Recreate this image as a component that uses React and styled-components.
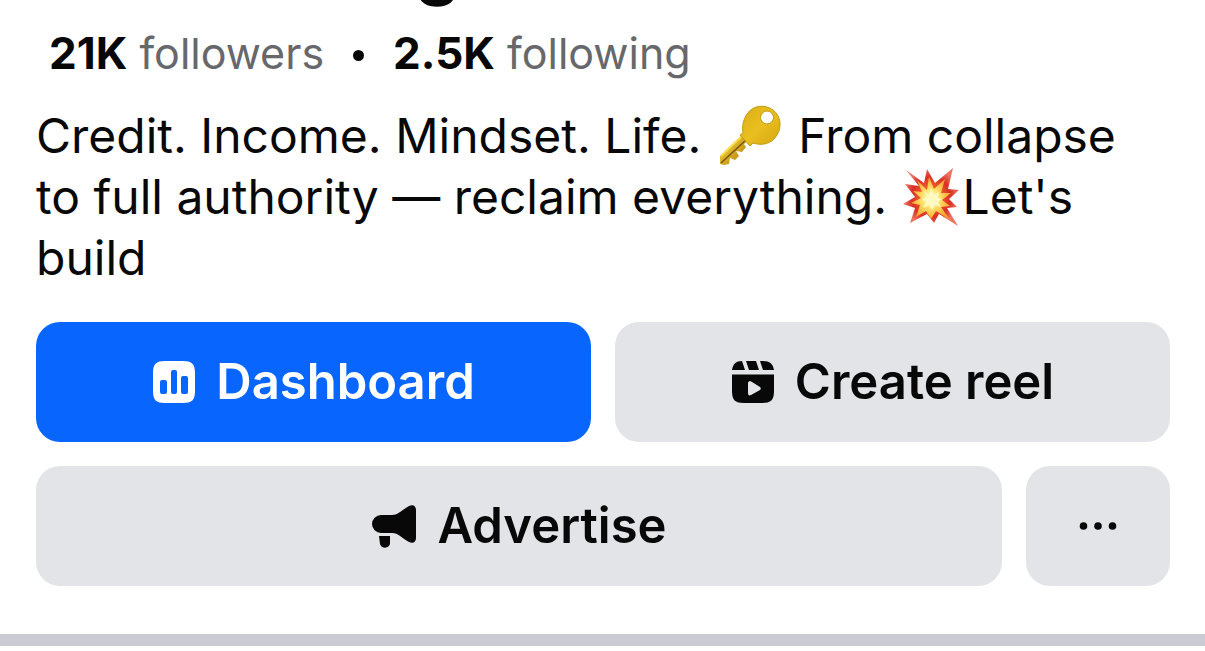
import React from "react";
import styled, { createGlobalStyle } from "styled-components";

const GlobalStyle = createGlobalStyle`
  * { box-sizing: border-box; }
  body {
    margin: 0;
    background: #ffffff;
    color: #080809;
    font-family: Inter, "Liberation Sans", sans-serif;
  }
`;

const Page = styled.main`
  width: 100%;
`;

const NameClip = styled.header`
  height: 27px;
  padding: 0 36px 0 415px;
  overflow: hidden;
`;

const Name = styled.h1`
  margin: -75px 0 0;
  font-size: 72px;
  line-height: 80px;
  font-weight: 700;
`;

const Profile = styled.section`
  padding: 0 35px 48px 36px;
`;

const Stats = styled.div`
  display: flex;
  align-items: center;
  gap: 29px;
  padding-left: 13px;
  font-size: 43px;
  line-height: 52px;
`;

const Stat = styled.a`
  color: #67686b;
  text-decoration: none;
  white-space: nowrap;

  strong {
    color: #080809;
    font-size: 44px;
    font-weight: 700;
  }
`;

const Dot = styled.span`
  width: 11px;
  height: 11px;
  margin-top: 4px;
  border-radius: 50%;
  background: #080809;
`;

const Bio = styled.p`
  margin: 26px 0 34px;
  font-size: 48px;
  line-height: 61px;
`;

const Emoji = styled.svg`
  display: inline-block;
  width: 62px;
  height: 60px;
  margin: -12px ${(p) => p.$gap || 0}px;
  vertical-align: baseline;
`;

const Actions = styled.div`
  display: grid;
  gap: 24px;
`;

const ActionRow = styled.div`
  display: grid;
  grid-template-columns: ${(p) => p.$columns};
  gap: 24px;
`;

const Button = styled.button`
  display: flex;
  align-items: center;
  justify-content: center;
  gap: 20px;
  height: 120px;
  padding: 0;
  border: 0;
  border-radius: 24px;
  background: ${(p) => (p.$primary ? "#0866ff" : "#e3e4e8")};
  color: ${(p) => (p.$primary ? "#ffffff" : "#080809")};
  font-family: inherit;
  font-size: 49px;
  line-height: 60px;
  font-weight: 600;
  cursor: pointer;
`;

const Icon = styled.svg`
  flex: none;
  width: ${(p) => p.$width || 44}px;
  height: 44px;
  fill: currentColor;
`;

const Divider = styled.hr`
  height: 12px;
  margin: 0;
  border: 0;
  background: #c9ccd3;
`;

function KeyEmoji() {
  return (
    <Emoji viewBox="0 0 62 60" $gap={4} role="img" aria-label="key">
      <defs>
        <linearGradient id="keyBow" x1="0" y1="0" x2="1" y2="1">
          <stop offset="0" stopColor="#d8ad16" />
          <stop offset="0.5" stopColor="#e9bf20" />
          <stop offset="1" stopColor="#d6a710" />
        </linearGradient>
        <linearGradient id="keyShaft" x1="0" y1="0" x2="1" y2="1">
          <stop offset="0.2" stopColor="#f3d33c" />
          <stop offset="0.8" stopColor="#b98710" />
        </linearGradient>
      </defs>
      <path fill="url(#keyShaft)" d="M24 29 1 51v8l4 1 5-1 1-6 5 2 4-4-3-5 6 1 4-5-2-3 7-6-4-7Z" />
      <path fill="none" stroke="#795409" strokeWidth="1.5" d="M27 35 2 58" />
      <path fill="none" stroke="#f8dd4c" strokeWidth="2" d="M23 31 2 51" />
      <path
        fill="url(#keyBow)"
        fillRule="evenodd"
        stroke="#c39a13"
        strokeWidth="1"
        d="M24 28c-1-6 0-13 4-19C34 0 46-1 54 5c8 6 9 17 4 25-5 9-15 11-24 8l-3 3-10-11ZM48 6a6.500 6.500 0 1 0 0 13 6.500 6.500 0 0 0 0-13Z"
      />
    </Emoji>
  );
}

function BurstEmoji() {
  return (
    <Emoji viewBox="0 0 62 60" role="img" aria-label="collision">
      <defs>
        <radialGradient id="burstRed">
          <stop offset="0.4" stopColor="#ef562c" />
          <stop offset="0.7" stopColor="#d93027" />
          <stop offset="1" stopColor="#ed7460" />
        </radialGradient>
        <radialGradient id="burstGold">
          <stop offset="0" stopColor="#fffdda" />
          <stop offset="0.4" stopColor="#ffe875" />
          <stop offset="1" stopColor="#f9a52a" />
        </radialGradient>
      </defs>
      <path fill="url(#burstRed)" d="m5 4 18 13 3-14 8 14L52 2l-5 21 11 1-10 9 8 8-10 1 11 18-19-12-5 9-7-9-17 9 5-15-12-4 12-7L4 18l14 2Z" />
      <path fill="url(#burstGold)" d="m16 14 10 10 2-13 5 12 11-10-4 14 10 0-9 7 8 6-9 1 9 13-14-9-5 8-5-8-10 6 4-12-9-2 10-5-8-7 9 1Z" />
      <path fill="#fff9c3" d="m23 25 5 4 2-7 3 7 5-3-1 6 4 1-4 3 3 5-6-2-3 5-3-5-6 3 3-6-4-3 5-2Z" />
    </Emoji>
  );
}

function DashboardIcon() {
  return (
    <Icon viewBox="0 0 44 44" aria-hidden="true">
      <path
        fillRule="evenodd"
        d="M13 1h18c9 0 12 3 12 12v18c0 9-3 12-12 12H13C4 43 1 40 1 31V13C1 4 4 1 13 1ZM10 20a2 2 0 0 0-2 2v10a2 2 0 0 0 2 2h3a2 2 0 0 0 2-2V22a2 2 0 0 0-2-2ZM21 10a2 2 0 0 0-2 2v20a2 2 0 0 0 2 2h2a2 2 0 0 0 2-2V12a2 2 0 0 0-2-2ZM31 16a2 2 0 0 0-2 2v14a2 2 0 0 0 2 2h3a2 2 0 0 0 2-2V18a2 2 0 0 0-2-2Z"
      />
    </Icon>
  );
}

function ReelIcon() {
  return (
    <Icon viewBox="0 0 44 44" aria-hidden="true">
      <path d="M1 10c1-6 4-9 10-9l3 9ZM15 1h10l3 9H18ZM29 1h3c7 0 10 3 11 9H32Z" />
      <path
        fillRule="evenodd"
        d="M1 14.500h42V31c0 9-3 12-12 12H13C4 43 1 40 1 31ZM19 21c-1 0-2 1-2 2v10c0 2 1 3 3 2l9-5c1-1 1-2 0-3l-8-5Z"
      />
    </Icon>
  );
}

function MegaphoneIcon() {
  return (
    <Icon viewBox="0 0 46 44" $width={46} aria-hidden="true">
      <path d="M10 11h11c6 0 10-5 17-9 4-2 7 0 7 4v28c0 4-3 6-7 4-7-4-11-9-17-9H10a9 9 0 0 1 0-18ZM8 32h11v7c0 6-9 6-10 1Z" />
    </Icon>
  );
}

function MoreIcon() {
  return (
    <Icon viewBox="0 0 44 44" aria-hidden="true">
      <circle cx="7.500" cy="22" r="3.800" />
      <circle cx="22" cy="22" r="3.800" />
      <circle cx="36.500" cy="22" r="3.800" />
    </Icon>
  );
}

export default function App() {
  return (
    <>
      <GlobalStyle />
      <Page>
        <NameClip>
          <Name>g</Name>
        </NameClip>
        <Profile>
          <Stats>
            <Stat href="#followers">
              <strong>21K</strong> followers
            </Stat>
            <Dot />
            <Stat href="#following">
              <strong>2.5K</strong> following
            </Stat>
          </Stats>
          <Bio>
            Credit. Income. Mindset. Life. <KeyEmoji /> From collapse
            <br />
            to full authority — reclaim everything. <BurstEmoji />
            Let's
            <br />
            build
          </Bio>
          <Actions>
            <ActionRow $columns="1fr 1fr">
              <Button type="button" $primary>
                <DashboardIcon />
                Dashboard
              </Button>
              <Button type="button">
                <ReelIcon />
                Create reel
              </Button>
            </ActionRow>
            <ActionRow $columns="1fr 144px">
              <Button type="button">
                <MegaphoneIcon />
                Advertise
              </Button>
              <Button type="button" aria-label="More options">
                <MoreIcon />
              </Button>
            </ActionRow>
          </Actions>
        </Profile>
        <Divider />
      </Page>
    </>
  );
}
